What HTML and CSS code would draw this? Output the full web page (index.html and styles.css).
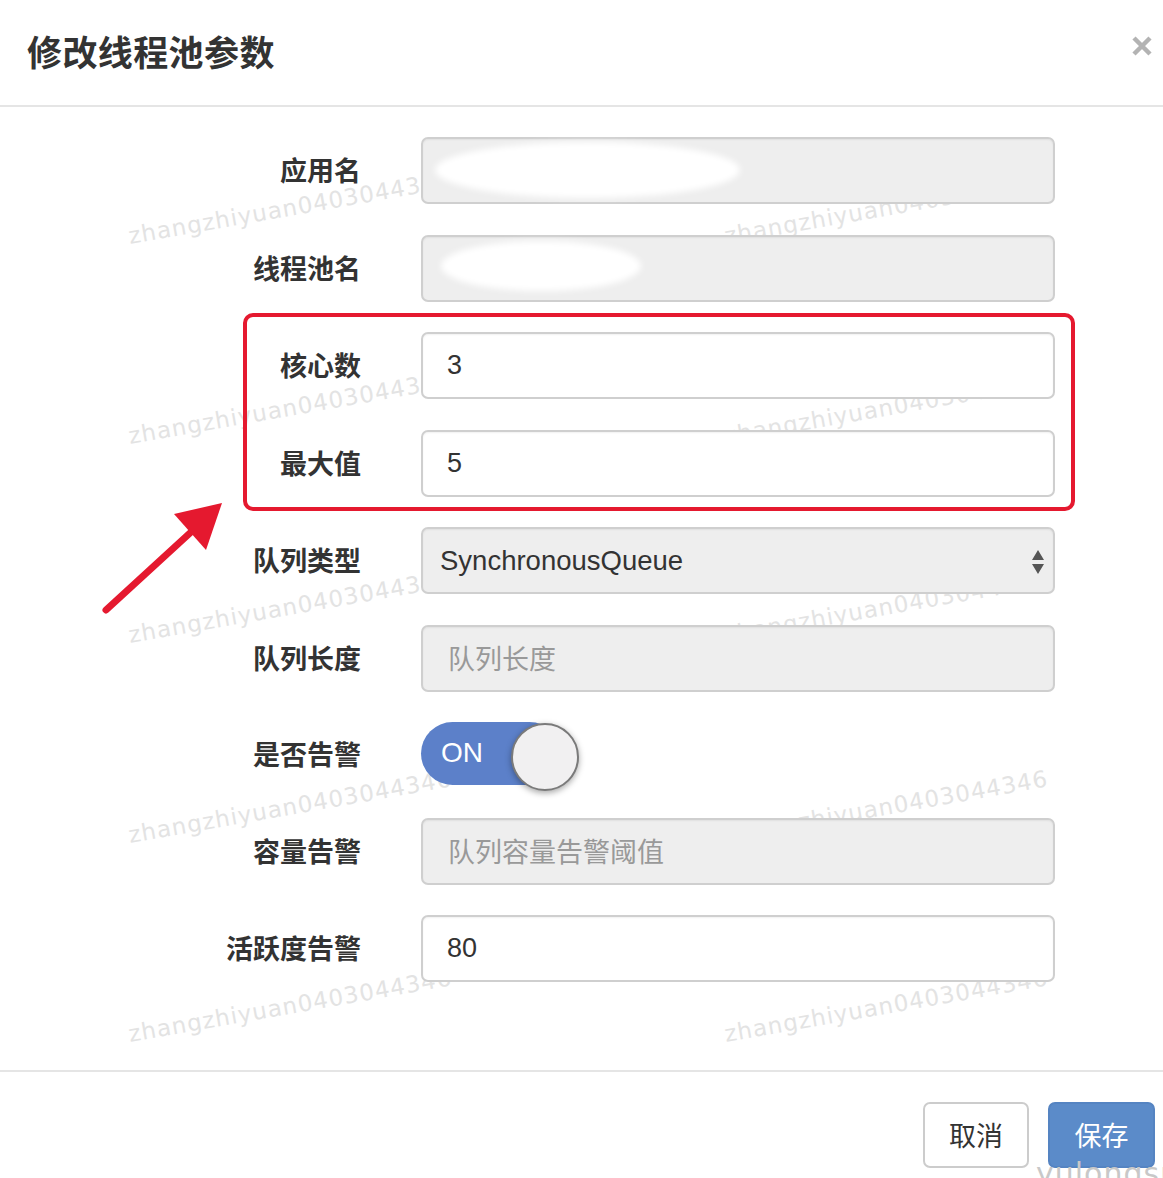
FILE: index.html
```html
<!DOCTYPE html>
<html lang="zh">
<head>
<meta charset="utf-8">
<title>修改线程池参数</title>
<link rel="stylesheet" href="styles.css">
</head>
<body>
<div class="modal">
  <div class="watermarks">
    <span>zhangzhiyuan0403044346</span><span>zhangzhiyuan0403044346</span>
    <span>zhangzhiyuan0403044346</span><span>zhangzhiyuan0403044346</span>
    <span>zhangzhiyuan0403044346</span><span>zhangzhiyuan0403044346</span>
    <span>zhangzhiyuan0403044346</span><span>zhangzhiyuan0403044346</span>
    <span>zhangzhiyuan0403044346</span><span>zhangzhiyuan0403044346</span>
  </div>
  <header class="modal-header">
    <h1 class="title">修改线程池参数</h1>
    <svg class="close" width="20" height="20" viewBox="0 0 20 20"><path d="M2 2 L18 18 M18 2 L2 18" stroke="#b3b3b3" stroke-width="4.5" stroke-linecap="butt"/></svg>
  </header>
  <main class="modal-body">
    <form class="form">
      <label class="label">应用名</label>
      <div class="field"><div class="control disabled"></div><div class="blob blob1"></div></div>
      <label class="label">线程池名</label>
      <div class="field"><div class="control disabled"></div><div class="blob blob2"></div></div>
      <label class="label">核心数</label>
      <div class="field"><div class="control">3</div></div>
      <label class="label">最大值</label>
      <div class="field"><div class="control">5</div></div>
      <label class="label">队列类型</label>
      <div class="field"><div class="control disabled select">SynchronousQueue<svg class="caret" width="14" height="26" viewBox="0 0 14 26"><path d="M7 1 L13 11 H1 Z M1 15 H13 L7 25 Z" fill="#555"/></svg></div></div>
      <label class="label">队列长度</label>
      <div class="field"><div class="control disabled placeholder">队列长度</div></div>
      <label class="label">是否告警</label>
      <div class="field toggle-field"><div class="toggle"><span class="on">ON</span><span class="knob"></span></div></div>
      <label class="label">容量告警</label>
      <div class="field"><div class="control disabled placeholder">队列容量告警阈值</div></div>
      <label class="label">活跃度告警</label>
      <div class="field"><div class="control">80</div></div>
    </form>
    <div class="highlight"></div>
    <svg class="arrow" width="140" height="130" viewBox="0 0 140 130"><path d="M6 107 L90 30" stroke="#e5192f" stroke-width="7" stroke-linecap="round"/><path d="M122 0 L74 11 L106 47 Z" fill="#e5192f"/></svg>
  </main>
  <footer class="modal-footer">
    <button class="btn btn-default">取消</button>
    <button class="btn btn-primary">保存</button>
    <span class="corner-mark">yulongsu</span>
  </footer>
</div>
</body>
</html>
```
FILE: styles.css
```css
* { box-sizing: border-box; }
html, body { margin: 0; padding: 0; background: #fff; }
body {
  font-family: "Liberation Sans", "Noto Sans CJK SC", sans-serif;
  color: #333;
  width: 1163px;
  height: 1178px;
  overflow: hidden;
}
.modal { position: relative; width: 1163px; height: 1178px; }

.watermarks {
  position: absolute;
  left: 131px;
  top: 160px;
  display: grid;
  grid-template-columns: 596px 400px;
  grid-auto-rows: 199.5px;
  z-index: 0;
  pointer-events: none;
}
.watermarks span {
  display: block;
  font-family: "DejaVu Sans", sans-serif;
  font-size: 23px;
  letter-spacing: 1px;
  color: #e3e3e3;
  transform: rotate(-10deg);
  transform-origin: 0 100%;
  white-space: nowrap;
  line-height: 28px;
  height: 28px;
  margin-top: 62px;
}

.modal-header {
  position: relative;
  z-index: 1;
  height: 107px;
  border-bottom: 2px solid #e5e5e5;
  display: flex;
  align-items: center;
  justify-content: space-between;
  padding: 0 11px 4px 27px;
}
.title {
  margin: 0;
  font-family: "Noto Sans CJK SC", sans-serif;
  font-size: 35px;
  font-weight: 600;
  color: #333;
  letter-spacing: 0.4px;
}
.close { margin-top: -10px; }

.modal-body {
  position: relative;
  padding: 30px 0 88px 0;
}
.form {
  position: relative;
  z-index: 1;
  display: grid;
  grid-template-columns: 361px 634px;
  grid-template-rows: repeat(6, 67px) 65px 67px 67px;
  column-gap: 60px;
  row-gap: 30.5px;
  margin: 0;
}
.label {
  font-family: "Noto Sans CJK SC", sans-serif;
  font-size: 27px;
  font-weight: 700;
  color: #333;
  text-align: right;
  display: flex;
  align-items: center;
  justify-content: flex-end;
  padding-bottom: 2px;
}
.field { position: relative; }
.control {
  height: 67px;
  border: 2px solid #cfcfcf;
  border-radius: 7px;
  background: #fff;
  box-shadow: inset 0 1px 2px rgba(0,0,0,0.06);
  display: flex;
  align-items: center;
  padding: 0 0 0 24px;
  font-size: 27px;
  color: #333;
  font-family: "Liberation Sans", "Noto Sans CJK SC", sans-serif;
}
.control.disabled { background: #eeeeee; }
.control.placeholder { color: #999; padding-left: 25px; font-family: "Noto Sans CJK SC", sans-serif; font-size: 27px; padding-bottom: 2px; }
.control.select {
  padding-left: 17px;
  justify-content: space-between;
  padding-right: 8px;
  font-size: 27.5px;
}
.caret { margin-top: 2px; }

.blob {
  position: absolute;
  background: #fff;
  border-radius: 50%;
  filter: blur(3px);
}
.blob1 { left: 14px; top: 5px; width: 305px; height: 56px; }
.blob2 { left: 20px; top: 6px; width: 200px; height: 50px; }

.toggle-field { display: flex; align-items: flex-start; }
.toggle {
  position: relative;
  width: 158px;
  height: 63px;
  margin-top: 0;
}
.on {
  position: absolute;
  left: 0;
  top: 0;
  width: 140px;
  height: 63px;
  background: #5c80c9;
  border-radius: 32px;
  color: #fff;
  font-size: 28px;
  display: flex;
  align-items: center;
  padding-left: 20px;
  padding-bottom: 2px;
}
.knob {
  position: absolute;
  left: 90px;
  top: 1px;
  width: 68px;
  height: 68px;
  border-radius: 50%;
  background: #f1f0f1;
  border: 2px solid #7a7a7a;
  box-shadow: 0 2px 6px rgba(0,0,0,0.35);
}

.highlight {
  position: absolute;
  left: 243px;
  top: 206px;
  width: 832px;
  height: 198px;
  border: 4px solid #e5192f;
  border-radius: 10px;
  z-index: 2;
  pointer-events: none;
}
.arrow {
  position: absolute;
  left: 100px;
  top: 396px;
  z-index: 2;
}

.modal-footer {
  position: relative;
  z-index: 1;
  border-top: 2px solid #e5e5e5;
  display: flex;
  justify-content: flex-end;
  gap: 19px;
  padding: 30px 8px 0 0;
}
.btn {
  font-family: "Noto Sans CJK SC", sans-serif;
  font-size: 27px;
  height: 66px;
  width: 106px;
  border-radius: 7px;
  padding: 0 0 2px 0;
  cursor: pointer;
}
.btn-default {
  background: #fff;
  border: 2px solid #cccccc;
  color: #333;
}
.btn-primary {
  background: #5b8bc9;
  border: 2px solid #5584c2;
  color: #fff;
  width: 107px;
}
.corner-mark {
  position: absolute;
  left: 1036px;
  top: 84px;
  font-family: "DejaVu Sans", sans-serif;
  font-size: 30px;
  color: #c8c8c8;
  letter-spacing: 1px;
  z-index: 3;
}
```
